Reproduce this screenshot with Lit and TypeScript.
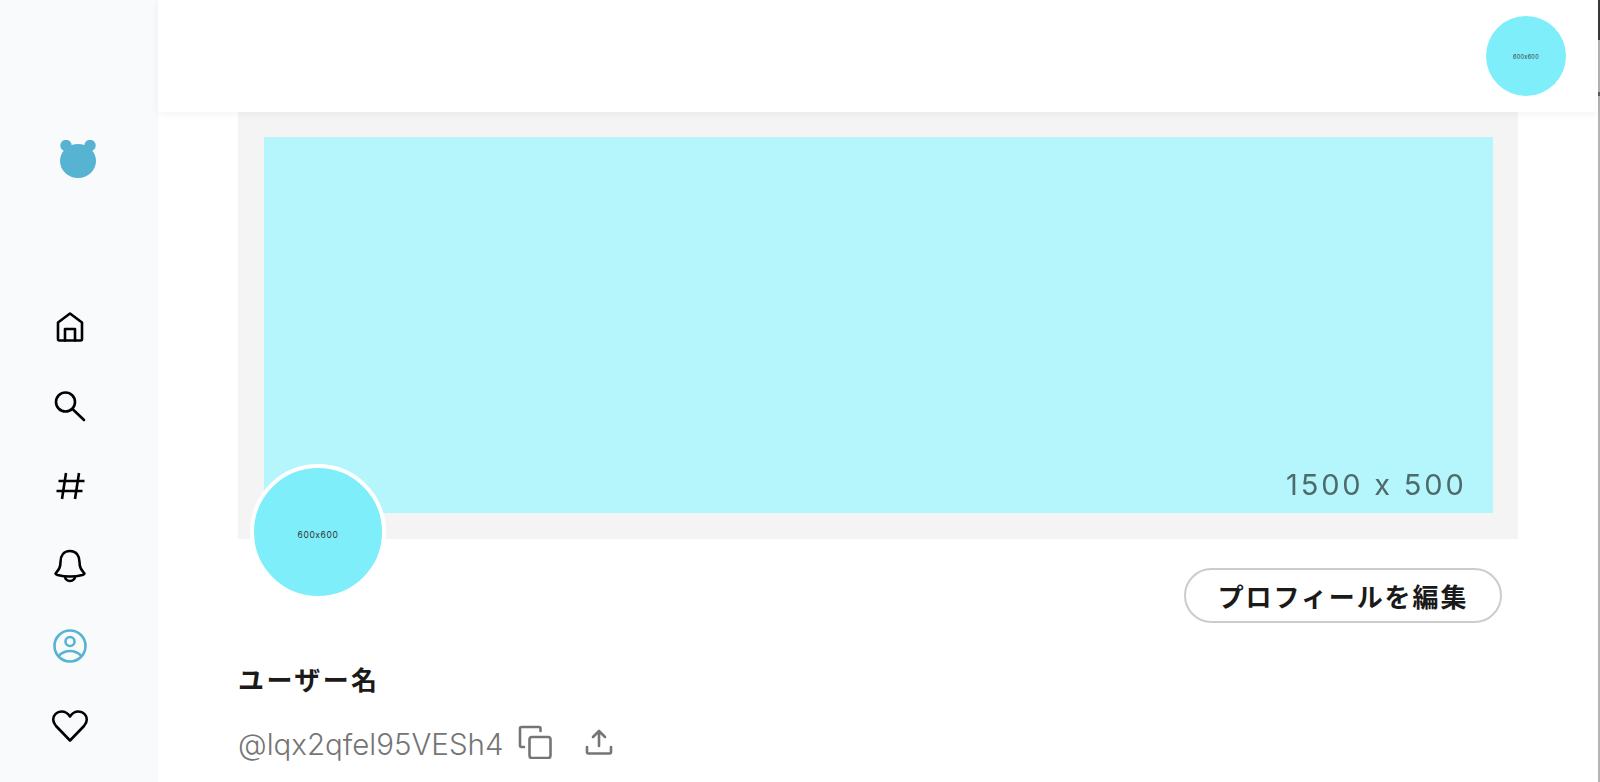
import { LitElement, html, css } from "lit";
import { customElement } from "lit/decorators.js";

@customElement("app-root")
export class AppRoot extends LitElement {
  static styles = css`
    :host { display: grid; grid-template-columns: 158px 1fr 2px; width: 1600px; height: 782px; overflow: hidden; background: #fff; font-family: "Noto Sans CJK JP", "Noto Sans", sans-serif; }
    .side { background: #f9fafc; display: flex; flex-direction: column; align-items: flex-start; }
    .logo { margin: 140px 0 0 60px; width: 36px; height: 38px; display: block; }
    .nav { display: flex; flex-direction: column; margin-top: 128px; gap: 40px; }
    .nav svg { display: block; width: 40px; height: 40px; margin-left: 50px; }
    .main { position: relative; min-width: 0; display: flex; flex-direction: column; }
    .top { height: 112px; flex: none; display: flex; align-items: center; justify-content: flex-end; padding: 0 32px 0 0; background: #fff; box-shadow: 0 1px 8px rgba(0,0,0,.06); position: relative; z-index: 2; }
    .ava { border-radius: 50%; background: #7eeefa; display: flex; align-items: center; justify-content: center; color: #333; box-sizing: border-box; font-family: "Inter", sans-serif; }
    .ava.small { width: 80px; height: 80px; font-size: 5.5px; letter-spacing: .3px; padding-top: 2px; }
    .content { padding: 0 80px; position: relative; }
    .banner { height: 427px; padding: 25px 25.5px 26px; box-sizing: border-box; background: #f4f4f4; }
    .banner-in { height: 100%; background: #b4f6fb; display: flex; align-items: flex-end; justify-content: flex-end; padding: 0 26px 13px 0; box-sizing: border-box; }
    .dims { font: 400 29px/30px "Inter", sans-serif; letter-spacing: 2.8px; color: #4f6a6c; filter: blur(.4px); }
    .ava.big { position: absolute; left: 92px; top: 352px; width: 136px; height: 136px; border: 4px solid #fff; font-size: 8.5px; letter-spacing: .6px; padding-top: 6px; }
    .actions { display: flex; justify-content: flex-end; padding: 29px 16px 0 0; }
    .edit { height: 55px; width: 318px; box-sizing: border-box; border: 2px solid #ccc; border-radius: 28px; background: #fff; font-family: "Noto Sans CJK JP", "Noto Sans", sans-serif; font-size: 26px; font-weight: 700; color: #1a1a1a; letter-spacing: 1.9px; padding: 0; line-height: 36px; }
    .name { margin-top: 38px; font-size: 26px; font-weight: 700; color: #1a1a1a; line-height: 36px; letter-spacing: 2.4px; }
    .handle-row { display: flex; align-items: flex-start; margin-top: 25px; color: #757575; }
    .handle { font: 300 29.5px/36px "Inter", sans-serif; margin-top: 4px; }
    .handle-row svg { display: block; }
    .copy { margin: 3px 0 0 14px; }
    .up { margin: 6px 0 0 33px; }
    .bar { background: #b4b4b4; display: flex; flex-direction: column; }
    .thumb { height: 40px; background: #3a3a3a; }
    .tick { height: 4px; margin-top: 52px; background: #5c5c5c; }
  `;

  render() {
    return html`
      <aside class="side">
        <svg class="logo" viewBox="0 0 36 38"><circle cx="6" cy="5.5" r="5.7" fill="#56b3d1"/><circle cx="30" cy="5.5" r="5.7" fill="#56b3d1"/><ellipse cx="18" cy="21" rx="18" ry="17" fill="#56b3d1"/></svg>
        <nav class="nav">
          <svg viewBox="0 0 40 40" fill="none" stroke="#000" stroke-width="2.6" stroke-linejoin="round" stroke-linecap="round"><path d="M20 7.500 8 16.500V33q0 1.500 1.500 1.500h21Q32 34.500 32 33V16.500z"/><path d="M15 34.500V23h10v11.500"/></svg>
          <svg viewBox="0 0 40 40" fill="none" stroke="#000" stroke-width="2.6" stroke-linecap="round"><circle cx="15.500" cy="16" r="9.500"/><path d="M23 23.500l11 10.500"/></svg>
          <svg viewBox="0 0 40 40" fill="none" stroke="#000" stroke-width="2.6"><path d="M16 7l-4 26M29 7l-4 26M8.500 15h26M6.500 25h26"/></svg>
          <svg viewBox="0 0 40 40" fill="none" stroke="#000" stroke-width="2.6" stroke-linejoin="round"><path d="M20 5c-6.500 0-9.500 5-9.500 11 0 6-2 8-5 11.500 0 .5 .5 1 2 1.500 8 2 17 2 25 0 1.500-.5 2-1 2-1.500-3-3.500-5-5.500-5-11.500 0-6-3-11-9.500-11z"/><path d="M15 30c0 3 2.200 5 5 5s5-2 5-5"/></svg>
          <svg viewBox="0 0 40 40" fill="none" stroke="#56b3d1" stroke-width="2.6"><circle cx="20" cy="20" r="15.500"/><circle cx="20" cy="15.500" r="4.500"/><path d="M8.500 30c3-3 7-5 11.500-5s8.500 2 11.500 5"/></svg>
          <svg viewBox="0 0 40 40" fill="none" stroke="#000" stroke-width="2.6" stroke-linejoin="round"><path d="M20 34.500 6 20c-2-2.200-2.800-4-2.800-6.500C3.200 9 6.800 5.500 11.500 5.500c3.500 0 6.500 1.800 8.500 5 2-3.200 5-5 8.500-5 4.700 0 8.300 3.500 8.300 8 0 2.500-.8 4.300-2.800 6.500z"/></svg>
        </nav>
      </aside>
      <div class="main">
        <header class="top"><div class="ava small">600x600</div></header>
        <section class="content">
          <div class="banner"><div class="banner-in"><span class="dims">1500 x 500</span></div></div>
          <div class="ava big">600x600</div>
          <div class="actions"><button class="edit">プロフィールを編集</button></div>
          <div class="name">ユーザー名</div>
          <div class="handle-row">
            <span class="handle">@lqx2qfel95VESh4</span>
            <svg class="copy" width="34" height="34" viewBox="0 0 34 34" fill="none" stroke="#757575" stroke-width="2.6" stroke-linejoin="round" stroke-linecap="round"><path d="M6 22H3.500Q2 22 2 20.500V3.500Q2 2 3.500 2H21q1.500 0 1.500 1.500V6"/><rect x="11.500" y="12" width="21" height="21" rx="2.500"/></svg>
            <svg class="up" width="28" height="28" viewBox="0 0 28 28" fill="none" stroke="#757575" stroke-width="2.6" stroke-linecap="round" stroke-linejoin="round"><path d="M14 18V3M8 9l6-6 6 6M2 19v5q0 1.500 1.500 1.500h21q1.500 0 1.500-1.500v-5"/></svg>
          </div>
        </section>
      </div>
      <div class="bar"><div class="thumb"></div><div class="tick"></div></div>
    `;
  }
}
